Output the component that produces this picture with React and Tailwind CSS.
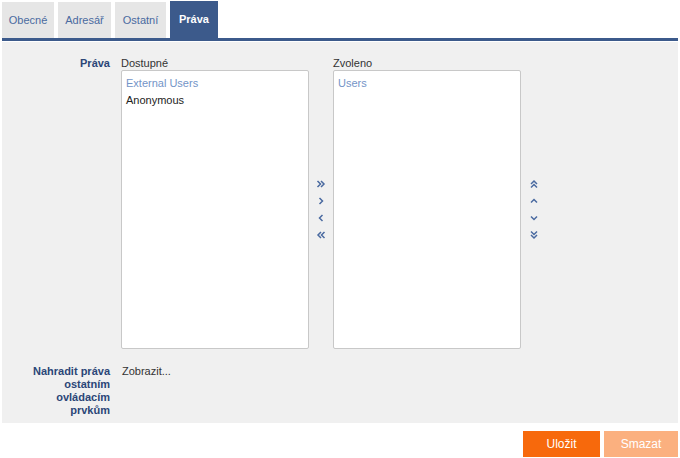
import React from 'react';

const font = { fontFamily: '"Liberation Sans", Arial, sans-serif' };

function Tab({ label, width, active }) {
  return (
    <div
      className={
        active
          ? 'h-[37px] flex items-center justify-center bg-[#3c5a8b] text-white font-bold'
          : 'h-[36px] flex items-center justify-center bg-[#e6e6e6] text-[#4a6aa0]'
      }
      style={{ width }}
    >
      {label}
    </div>
  );
}

function Chevron({ dir, double }) {
  const rot = { right: 0, down: 90, left: 180, up: 270 }[dir];
  return (
    <svg width="10" height="10" viewBox="0 0 10 10" style={{ transform: `rotate(${rot}deg)` }}>
      {double ? (
        <g fill="none" stroke="#4a6aa0" strokeWidth="1.5">
          <path d="M1.5 2 L4.5 5 L1.5 8" />
          <path d="M5 2 L8 5 L5 8" />
        </g>
      ) : (
        <path d="M3.5 2 L6.5 5 L3.5 8" fill="none" stroke="#4a6aa0" strokeWidth="1.5" />
      )}
    </svg>
  );
}

function ListBox({ children }) {
  return (
    <div className="w-[188px] h-[279px] bg-white border border-[#c8c8c8] rounded-[2px] px-[4px] pt-[6px] flex flex-col gap-[4px] leading-[13px]">
      {children}
    </div>
  );
}

export default function App() {
  return (
    <div className="w-[680px] h-[458px] bg-white text-[11px] text-[#333]" style={font}>
      <div className="flex items-end gap-[4px] pl-[2px] pt-[1px]">
        <Tab label="Obecné" width={52} />
        <Tab label="Adresář" width={53} />
        <Tab label="Ostatní" width={51} />
        <Tab label="Práva" width={48} active />
      </div>
      <div className="mx-[2px] h-[3px] bg-[#3c5a8b]" />
      <div className="mx-[2px] mt-[1px] h-[381px] bg-[#f0f0f0] pt-[15px] flex flex-col">
        <div className="flex">
          <div className="w-[108px] text-right font-bold text-[#2b4677] leading-[13px]">Práva</div>
          <div className="ml-[11px] flex">
            <div className="flex flex-col">
              <div className="h-[13px] leading-[13px] text-[#333]">Dostupné</div>
              <ListBox>
                <div className="text-[#7394c7]">External Users</div>
                <div className="text-[#222]">Anonymous</div>
              </ListBox>
            </div>
            <div className="w-[24px] flex flex-col items-center pt-[122px] gap-[7px]">
              <Chevron dir="right" double />
              <Chevron dir="right" />
              <Chevron dir="left" />
              <Chevron dir="left" double />
            </div>
            <div className="flex flex-col">
              <div className="h-[13px] leading-[13px] text-[#333]">Zvoleno</div>
              <ListBox>
                <div className="text-[#7394c7]">Users</div>
              </ListBox>
            </div>
            <div className="w-[26px] flex flex-col items-center pt-[122px] gap-[7px]">
              <Chevron dir="up" double />
              <Chevron dir="up" />
              <Chevron dir="down" />
              <Chevron dir="down" double />
            </div>
          </div>
        </div>
        <div className="flex mt-[16px]">
          <div className="w-[108px] text-right font-bold text-[#2b4677] leading-[13px]">
            Nahradit práva
            <br />
            ostatním
            <br />
            ovládacím
            <br />
            prvkům
          </div>
          <div className="ml-[12px] leading-[13px] text-[#333]">Zobrazit...</div>
        </div>
      </div>
      <div className="flex justify-end gap-[4px] pr-[2px] mt-[8px]">
        <button className="w-[77px] h-[26px] bg-[#f7690c] text-white text-[12px]">Uložit</button>
        <button className="w-[74px] h-[26px] bg-[#fbb07f] text-white text-[12px]">Smazat</button>
      </div>
    </div>
  );
}
